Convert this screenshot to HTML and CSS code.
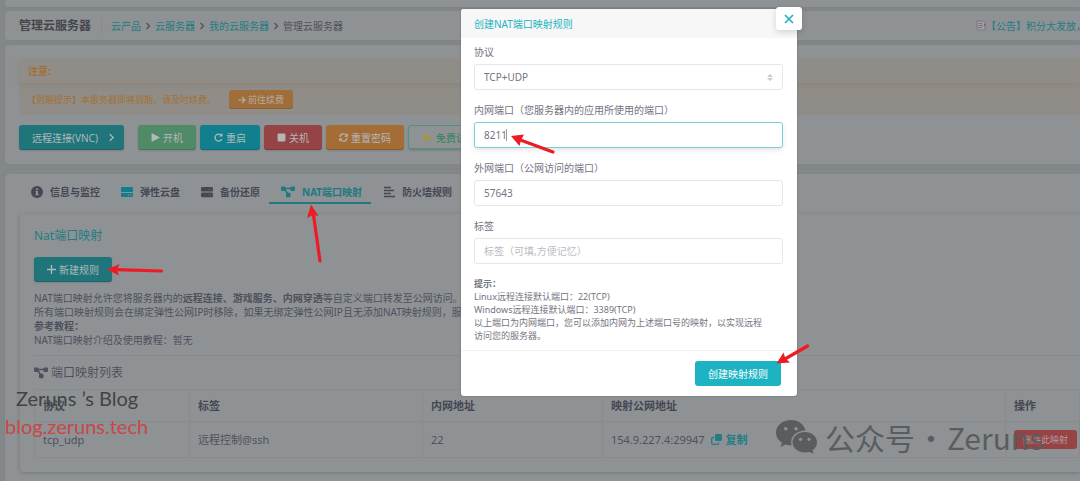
FILE: index.html
```html
<!DOCTYPE html>
<html lang="zh-CN">
<head>
<meta charset="utf-8">
<title>管理云服务器</title>
<link rel="stylesheet" href="styles.css">
</head>
<body>
<svg class="defs" aria-hidden="true">
  <symbol id="chev" viewBox="0 0 8 8"><path d="M2.500 1 5.500 4 2.500 7" fill="none" stroke="currentColor" stroke-width="1.200"/></symbol>
  <symbol id="nodes" viewBox="0 0 14 12"><path d="M3 2.500H11M3.500 3 7.500 9" stroke="currentColor" stroke-width="1.400"/><rect x="0" y="0.500" width="4.500" height="4.500" rx="1" fill="currentColor"/><rect x="9.500" y="0.500" width="4.500" height="4.500" rx="1" fill="currentColor"/><rect x="5" y="6.800" width="4.500" height="4.500" rx="1" fill="currentColor"/></symbol>
</svg>
<main class="page">
  <div class="card card-top"></div>
  <header class="card crumbs">
    <h1>管理云服务器</h1>
    <nav>
      <a href="#">云产品</a><svg><use href="#chev"/></svg>
      <a href="#">云服务器</a><svg><use href="#chev"/></svg>
      <a href="#">我的云服务器</a><svg><use href="#chev"/></svg>
      <span>管理云服务器</span>
    </nav>
    <a class="news" href="#"><svg viewBox="0 0 10 11"><path d="M1 1H7L9 3V10H1Z" fill="#a09ca3" stroke="#76727c" stroke-width=".8"/><path d="M2.500 3.500H6M2.500 5.500H7M2.500 7.500H6" stroke="#706774" stroke-width=".8"/><path d="M8 4H9.500V6H8Z" fill="#935454"/></svg>【公告】积分大发放，</a>
  </header>
  <section class="card server">
    <div class="alert">
      <strong>注意:</strong>
      <div class="alert-body"><span>【到期提示】本服务器即将到期，请及时续费。</span>
        <button class="renew"><svg viewBox="0 0 8 8"><path d="M0 4H7M4 1 7 4 4 7" fill="none" stroke="currentColor" stroke-width="1.200"/></svg>前往续费</button></div>
    </div>
    <div class="actions">
      <button class="btn teal vnc">远程连接(VNC)<svg><use href="#chev"/></svg></button>
      <button class="btn green"><svg viewBox="0 0 8 8"><path d="M.5 0 8 4 .5 8Z" fill="currentColor"/></svg>开机</button>
      <button class="btn cyan"><svg viewBox="0 0 9 9"><path d="M7.500 2.700A3.500 3.500 0 1 0 7.800 6" fill="none" stroke="currentColor" stroke-width="1.300"/><path d="M8.500 0V3.600H5Z" fill="currentColor"/></svg>重启</button>
      <button class="btn red"><svg viewBox="0 0 8 8"><rect x=".5" y=".5" width="7" height="7" rx="1" fill="currentColor"/></svg>关机</button>
      <button class="btn orange"><svg viewBox="0 0 9 9"><path d="M1 4A3.500 3.500 0 0 1 7.500 2.500M8 5A3.500 3.500 0 0 1 1.500 6.500" fill="none" stroke="currentColor" stroke-width="1.200"/><path d="M8.700.3V3.700H5.300ZM.3 8.700V5.300H3.700Z" fill="currentColor"/></svg>重置密码</button>
      <button class="btn outline"><svg viewBox="0 0 10 10"><path d="M5 0 6.500 3.200 10 3.700 7.500 6.200 8.100 9.700 5 8 1.900 9.700 2.500 6.200 0 3.700 3.500 3.200Z" fill="#a8953a"/></svg>免费试用</button>
    </div>
  </section>
  <section class="card network">
    <nav class="tabs">
      <a href="#"><svg viewBox="0 0 12 12"><circle cx="6" cy="6" r="6" fill="currentColor"/><path d="M5 2.500H7V4H5ZM4.500 5H7V8H7.700V9.300H4.300V8H5V6.200H4.500Z" fill="#8e9294"/></svg>信息与监控</a>
      <a href="#"><svg class="disk" viewBox="0 0 12 12"><path d="M1 1H11Q12 1 12 2V6H0V2Q0 1 1 1ZM0 7H12V10Q12 11 11 11H1Q0 11 0 10Z" fill="currentColor"/><path d="M7 8.500H8.200V9.500H7ZM9.200 8.500H10.400V9.500H9.200Z" fill="#8e9294"/></svg>弹性云盘</a>
      <a href="#"><svg viewBox="0 0 12 12"><rect y="1" width="12" height="4.600" rx="1.200" fill="currentColor"/><rect y="6.600" width="12" height="4.600" rx="1.200" fill="currentColor"/><path d="M7.500 3.300H8.300M9.500 3.300H10.300M7.500 8.900H8.300M9.500 8.900H10.300" stroke="#73777c"/></svg>备份还原</a>
      <a href="#" class="active"><svg viewBox="0 0 14 12"><use href="#nodes"/></svg>NAT端口映射</a>
      <a href="#"><svg viewBox="0 0 12 12"><path d="M1 1.500H8M1 4.500H11M1 7.500H8M1 10.500H12" stroke="currentColor" stroke-width="1.400"/></svg>防火墙规则</a>
    </nav>
    <div class="panel">
      <h2>Nat端口映射</h2>
      <button class="btn teal add"><svg viewBox="0 0 8 8"><path d="M0 4H8M4 0V8" stroke="currentColor" stroke-width="1.200"/></svg>新建规则</button>
      <p class="intro">NAT端口映射允许您将服务器内的<b>远程连接、游戏服务、内网穿透</b>等自定义端口转发至公网访问。<br>所有端口映射规则会在绑定弹性公网IP时移除，如果无绑定弹性公网IP且无添加NAT映射规则，服务器<br><b>参考教程：</b><br>NAT端口映射介绍及使用教程：暂无</p>
      <h3><svg viewBox="0 0 14 12"><use href="#nodes"/></svg>端口映射列表</h3>
      <table>
        <thead><tr><th class="c1">协议</th><th class="c2">标签</th><th class="c3">内网地址</th><th class="c4">映射公网地址</th><th>操作</th></tr></thead>
        <tbody><tr><td>tcp_udp</td><td>远程控制@ssh</td><td>22</td><td><div class="address">154.9.227.4:29947 <a class="copy" href="#"><svg viewBox="0 0 11 11"><rect x="4" width="7" height="7" rx="1.200" fill="currentColor"/><path d="M3 3.500H1.700Q.7 3.500.7 4.500V9.300Q.7 10.300 1.700 10.300H6.500Q7.500 10.300 7.500 9.300V8.500" fill="none" stroke="currentColor" stroke-width="1.300"/></svg>复制</a></div></td><td><button class="delete">删除此映射</button></td></tr></tbody>
      </table>
    </div>
  </section>
</main>

<form class="modal" role="dialog" aria-labelledby="dlg-title">
  <header><h2 id="dlg-title">创建NAT端口映射规则</h2></header>
  <button type="button" class="close" aria-label="关闭"><svg viewBox="0 0 10 10"><path d="M1 1 9 9M9 1 1 9" stroke="currentColor" stroke-width="1.600"/></svg></button>
  <div class="fields">
    <label for="proto">协议</label>
    <div class="select"><select id="proto"><option>TCP+UDP</option></select><svg viewBox="0 0 6 7"><path d="M0 3 3 0 6 3ZM0 4H6L3 7Z" fill="#c9c9d0"/></svg></div>
    <label for="inner">内网端口（您服务器内的应用所使用的端口）</label>
    <div class="focus"><input id="inner" value="8211"><i class="caret"></i></div>
    <label for="outer">外网端口（公网访问的端口）</label>
    <input id="outer" value="57643">
    <label for="tag">标签</label>
    <input id="tag" placeholder="标签（可填,方便记忆）">
    <p><b>提示：</b><br>Linux远程连接默认端口：22(TCP)<br>Windows远程连接默认端口：3389(TCP)<br>以上端口为内网端口，您可以添加内网为上述端口号的映射，以实现远程<br>访问您的服务器。</p>
  </div>
  <footer><button type="submit">创建映射规则</button></footer>
</form>

<div class="mark blog"><span>Zeruns ’s Blog</span><span class="url">blog.zeruns.tech</span></div>
<div class="mark wechat"><svg viewBox="0 0 42 34"><path d="M15 0C6.500 0 0 5.500 0 12.700 0 17 2.200 20.400 6 22.800L4.500 27 9.500 24.500C11.500 25 13 25.300 15.500 25.200 13.500 17 20 10.500 29.500 10.500 28 4.500 22.500 0 15 0Z" fill="currentColor"/><path d="M29 12C22 12 16.500 16.500 16.500 22.300 16.500 28 22 32.500 29 32.500 30.700 32.500 32 32.200 33.400 31.700L37.500 34 36.500 30.300C39.500 28.300 41 25.500 41 22.300 41 16.500 35.500 12 29 12Z" fill="currentColor"/><g fill="#8e9294"><circle cx="9.800" cy="8.800" r="1.800"/><circle cx="20" cy="8.800" r="1.800"/><circle cx="24.500" cy="19.300" r="1.600"/><circle cx="33" cy="19.300" r="1.600"/></g></svg><span>公众号</span><span class="dot">·</span><span>Zeruns</span></div>
<svg class="arrows" viewBox="0 0 1080 481" aria-hidden="true">
  <g stroke="#ed1c24" stroke-width="3.200" stroke-linecap="round"><path d="M519 139.500 553 152M313.500 215 320 261M116 269.700 161.500 271M785 359 807.500 346"/></g>
  <g fill="#ed1c24"><path d="M511 136 524 134.500 521 140 519.500 146ZM311 204.500 318.500 216 313 215 307 218ZM107 269.500 119.500 264 117 269.700 119 275.500ZM776.500 363.500 783.500 352.500 785.500 358.500 790 362.500Z"/></g>
</svg>
</body>
</html>
```
FILE: styles.css
```css
* { box-sizing: border-box; }
body {
  margin: 0;
  min-height: 100vh;
  position: relative;
  overflow: hidden;
  background: #84888a;
  color: #4e505c;
  font: 10px/14px "Noto Sans", "Noto Sans CJK SC", sans-serif;
}
h1, h2, h3, p { margin: 0; font-weight: 400; }
a { color: #237d83; text-decoration: none; }
button, input, select { font: inherit; }
button { border: 0; padding: 0; border-radius: 3px; }
svg { flex: none; }
.defs { position: absolute; width: 0; height: 0; }

.page { padding-left: 5px; }
.card { background: #8e9294; border-radius: 4px 0 0 4px; box-shadow: 0 0 5px #7f8386; }
.card-top { height: 7px; margin-bottom: 4px; border-radius: 0 0 0 4px; }
.crumbs { height: 29px; margin-bottom: 5px; padding-left: 14px; display: flex; align-items: center; }
.crumbs h1 { font-size: 12px; font-weight: 700; color: #44464b; padding-right: 10px; border-right: 1px solid #868a8c; }
.crumbs nav { display: flex; align-items: center; gap: 3px; padding-left: 9px; }
.crumbs nav svg { width: 8px; height: 8px; }
.news { margin-left: auto; margin-right: -6px; display: flex; align-items: center; }
.news svg { width: 10px; height: 11px; }

.server { padding: 14px 0 14px 14px; margin-bottom: 10px; }
.alert { background: #908d88; color: #a56d34; border-radius: 3px 0 0 3px; }
.alert strong { display: block; padding: 5px 9px; border-bottom: 1px solid #8f8579; box-shadow: 0 2px 5px #8a8680; }
.alert-body { height: 31px; display: flex; align-items: center; gap: 13px; padding-left: 8px; font-size: 9px; }
.renew { height: 19px; padding: 0 9px; background: #a06e3a; color: #b5aca0; font-size: 9px; display: flex; align-items: center; gap: 2px; box-shadow: inset 0 -1px #8c6033; }
.renew svg { width: 8px; height: 8px; }
.actions { display: flex; gap: 4px; margin-top: 10px; }
.btn { height: 25px; color: #b0b8ba; display: flex; align-items: center; justify-content: center; gap: 3px; padding: 0 13px; white-space: nowrap; box-shadow: inset 0 -1px rgba(0, 0, 0, .15), 0 1px 2px #7f8385; }
.btn svg { width: 9px; height: 9px; }
.teal { background: #20757b; }
.green { background: #508a66; }
.cyan { background: #107f8e; padding: 0 14px; }
.red { background: #964346; }
.orange { background: #a36d35; }
.outline { background: #8e9294; color: #33805c; border: 1px solid #4f9478; }
.outline svg { margin-right: 2px; }
.vnc { margin-right: 10px; padding: 0 8px 0 13px; gap: 9px; }

.network { padding: 8px 0 10px 14px; }
.tabs { display: flex; margin-bottom: 10px; }
.tabs a { height: 22px; display: flex; align-items: center; gap: 7px; padding: 0 9px 0 12px; color: #454753; font-weight: 700; border-bottom: 2px solid transparent; }
.tabs svg { width: 12px; height: 12px; }
.tabs .disk { color: #137d8d; }
.tabs .active { color: #20797f; border-color: #20797f; }
.tabs .active svg { width: 14px; }
.panel { margin-left: 1px; padding: 13px 0 14px 14px; border-radius: 4px 0 0 4px; box-shadow: 0 1px 4px #73777a; }
.panel h2 { font-size: 12px; line-height: 18px; color: #237d83; }
.add { margin: 12px 0 9px; }
.intro { white-space: nowrap; padding-bottom: 8px; border-bottom: 1px solid #868a8c; }
.panel h3 { font-size: 12px; line-height: 18px; margin: 8px 0 7px; display: flex; align-items: center; gap: 3px; }
.panel h3 svg { width: 14px; height: 12px; }
table { width: 100%; table-layout: fixed; border-collapse: collapse; font-size: 11px; }
th, td { border: 1px solid #888c8e; text-align: left; padding: 0 8px; white-space: nowrap; }
th { height: 32px; color: #454753; }
td { height: 36px; }
.c1 { width: 155px; }
.c2 { width: 233px; }
.c3 { width: 180px; }
.c4 { width: 403px; }
.address, .copy { display: flex; align-items: center; }
.address { gap: 6px; }
.copy { gap: 4px; font-weight: 700; }
.copy svg { width: 11px; height: 11px; }
.delete { height: 19px; padding: 0 9px; background: #964346; color: #b29b9d; font-size: 9px; }

.modal { position: absolute; left: 461px; top: 9px; width: 336px; background: #fff; border-radius: 3px; box-shadow: 0 0 2px #666a6d; color: #757381; }
.modal header { height: 29px; padding: 8px 13px; background: #f7f7f7; border-radius: 3px 3px 0 0; }
.modal h2 { font-size: 10px; color: #22b3c1; }
.close { position: absolute; right: -5px; top: -2px; width: 26px; height: 23px; background: #fff; color: #1cb0c0; box-shadow: 0 2px 6px rgba(0, 0, 0, .15); display: flex; align-items: center; justify-content: center; }
.close svg { width: 10px; height: 10px; }
.fields { padding: 7px 14px 8px 13px; }
.fields label { display: block; margin-bottom: 5px; }
.fields input, .fields select { display: block; width: 100%; height: 26px; margin-bottom: 13px; padding: 0 9px; color: #757381; background: #fff; border: 1px solid #e6e6ea; border-radius: 3px; appearance: none; outline: 0; }
.fields input::placeholder { color: #bcbbc5; opacity: 1; }
.select, .focus { position: relative; }
.select svg { position: absolute; right: 10px; top: 10px; width: 6px; height: 7px; }
.fields .focus input { border-color: #76d2da; box-shadow: 0 2px 5px #e4e4e8; }
.caret { position: absolute; left: 32px; top: 7px; width: 1px; height: 12px; background: #999; }
.fields p { font-size: 9px; line-height: 13px; white-space: nowrap; }
.modal footer { border-top: 1px solid #f1f1f3; padding: 10px 16px 10px; display: flex; justify-content: flex-end; }
.modal footer button { height: 25px; padding: 0 13px; background: #1cb3c3; color: #fff; }

.mark { position: absolute; pointer-events: none; white-space: nowrap; }
.blog { left: 5px; top: 384px; font: 20px/28px Lato, sans-serif; color: #414446; }
.blog span { display: block; padding-left: 11px; }
.blog .url { padding-left: 0; color: #c84747; }
.wechat { left: 776px; top: 416px; display: flex; align-items: center; font: 30px/42px "Noto Sans CJK SC", sans-serif; color: #5a5d5f; }
.wechat svg { width: 42px; height: 34px; margin-right: 7px; }
.wechat .dot { width: 32px; text-align: center; }
.arrows { position: absolute; left: 0; top: 0; width: 1080px; height: 481px; pointer-events: none; }
```
